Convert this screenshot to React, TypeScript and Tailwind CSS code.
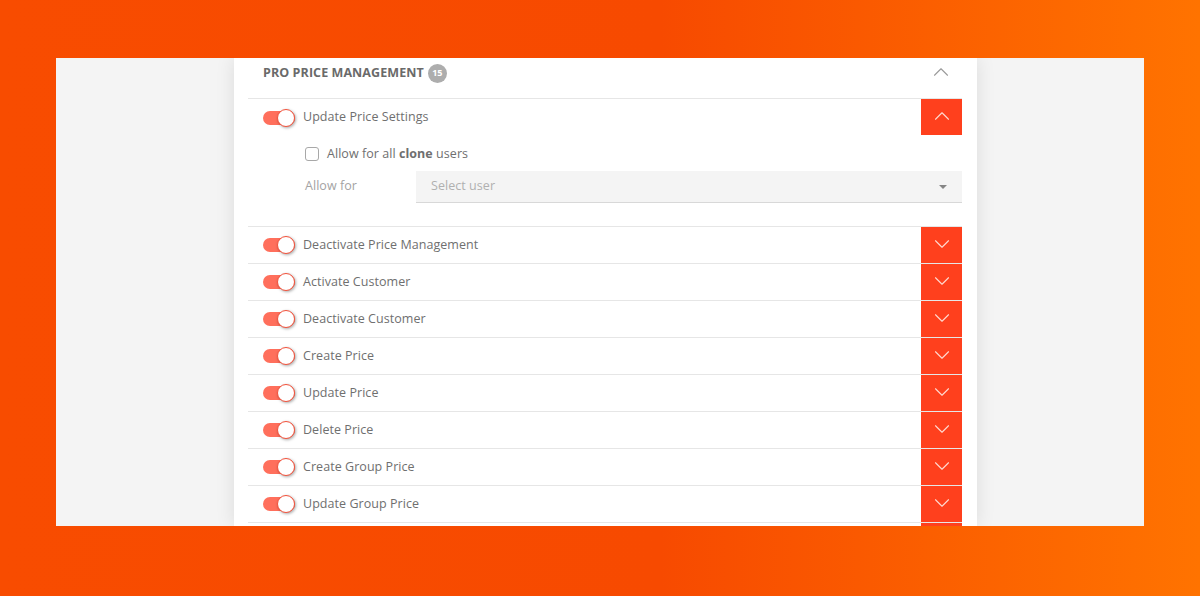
import React from "react";
import { ChevronDown, ChevronUp } from "lucide-react";

const rows = [
  "Deactivate Price Management",
  "Activate Customer",
  "Deactivate Customer",
  "Create Price",
  "Update Price",
  "Delete Price",
  "Create Group Price",
  "Update Group Price",
];

const Toggle = () => (
  <div className="relative h-[14px] w-[32px] shrink-0 rounded-full bg-[#ff6f5c]">
    <div className="absolute -top-[2px] right-0 h-[18px] w-[18px] rounded-full border-[1.5px] border-[#f4513a] bg-white shadow-[1px_1px_3px_rgba(0,0,0,0.35)]" />
  </div>
);

const Row = ({ label }: { label: string }) => (
  <div className="flex h-[37px] items-start border-b border-[#e6e6e6]">
    <div className="ml-[15px] flex h-[36px] items-center">
      <Toggle />
    </div>
    <span className="ml-[8px] mt-[8px] text-[12.5px] leading-[20px] tracking-[0.05px] text-[#6f6f6f]">
      {label}
    </span>
    <button className="ml-auto flex h-[36px] w-[41px] items-center justify-center bg-[#ff401d] pb-[2px] text-[#ffd9d0]">
      <ChevronDown size={26} strokeWidth={1} />
    </button>
  </div>
);

export default function App() {
  return (
    <div className="h-[596px] w-[1200px] overflow-hidden bg-linear-to-r/srgb from-[#f84c00] via-[#f74a00] via-55% to-[#ff7300] pl-[56px] pt-[58px] font-['Open_Sans','Noto_Sans',sans-serif]">
      <div className="h-[468px] w-[1088px] overflow-hidden bg-[#f4f4f4] pl-[178px]">
        <div className="h-full w-[743px] bg-white pl-[14px] pr-[15px] shadow-[0_0_18px_rgba(0,0,0,0.1)]">
          <div className="flex h-[41px] items-center border-b border-[#e6e6e6] pb-[10px] pl-[15px]">
            <span className="text-[12.5px] font-bold tracking-[0.08px] text-[#6a6a6a]">
              PRO PRICE MANAGEMENT
            </span>
            <span className="ml-[4px] flex h-[19px] w-[19px] items-center justify-center rounded-full bg-[#adadad] text-[9px] font-bold text-white">
              15
            </span>
            <ChevronUp size={26} strokeWidth={1} className="mb-[2px] ml-auto mr-[8px] text-[#9a9a9a]" />
          </div>

          <div className="h-[128px] border-b border-[#e6e6e6]">
            <div className="flex h-[36px] items-start">
              <div className="ml-[15px] flex h-[36px] items-center pt-[1px]">
                <Toggle />
              </div>
              <span className="ml-[8px] mt-[8px] text-[12.5px] leading-[20px] tracking-[0.05px] text-[#6f6f6f]">
                Update Price Settings
              </span>
              <button className="ml-auto flex h-[36px] w-[41px] items-center justify-center bg-[#ff401d] pb-[2px] text-[#ffd9d0]">
                <ChevronUp size={26} strokeWidth={1} />
              </button>
            </div>
            <div className="ml-[57px] mt-[9px] flex h-[20px] items-center">
              <div className="h-[14px] w-[14px] rounded-[3px] border border-[#a8a8a8] bg-white" />
              <span className="ml-[8px] text-[12.5px] tracking-[0.05px] text-[#6f6f6f]">
                Allow for all <b className="font-bold">clone</b> users
              </span>
            </div>
            <div className="ml-[57px] mt-[7px] flex items-center">
              <span className="mb-[2px] w-[111px] text-[12.5px] tracking-[0.05px] text-[#a3a3a3]">Allow for</span>
              <div className="flex h-[32px] flex-1 items-center justify-between border-b border-[#d8d8d8] bg-[#f4f4f4] pl-[15px] pr-[15px]">
                <span className="text-[12.5px] tracking-[0.05px] text-[#b0b0b0]">Select user</span>
                <div className="mt-[1px] h-0 w-0 border-x-[4px] border-t-[4px] border-x-transparent border-t-[#858585]" />
              </div>
            </div>
          </div>

          {rows.map((label) => (
            <Row key={label} label={label} />
          ))}
          <div className="ml-auto h-[36px] w-[41px] bg-[#ff401d]" />
        </div>
      </div>
    </div>
  );
}
